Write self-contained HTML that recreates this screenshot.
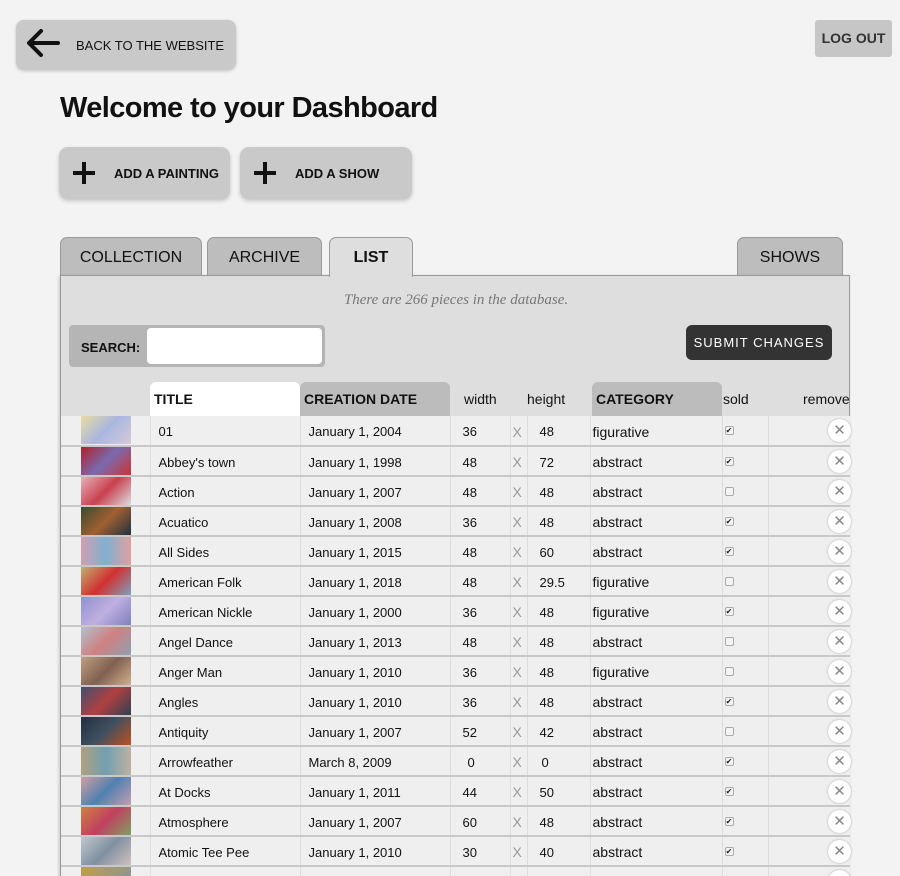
<!DOCTYPE html>
<html><head><meta charset="utf-8"><style>
*{box-sizing:border-box;margin:0;padding:0}
html,body{width:900px;height:876px;overflow:hidden}
body{background:#f3f3f3;font-family:"Liberation Sans",Arial,sans-serif;color:#111;position:relative}
.abs{position:absolute}
.back{left:16px;top:20px;width:220px;height:50px;background:#c9c9c9;border-radius:8px;box-shadow:0 1px 3px rgba(0,0,0,.2)}
.back span{position:absolute;left:60px;top:18px;font-size:13px}
.logout{left:815px;top:20px;width:77px;height:37px;background:#c6c6c6;border-radius:3px;font-weight:bold;font-size:14px;color:#333;text-align:center;line-height:37px}
h1{position:absolute;left:60px;top:92px;font-size:29px;font-weight:bold;letter-spacing:-0.6px}
.add{top:147px;height:52px;background:#c9c9c9;border-radius:9px;box-shadow:0 2px 4px rgba(0,0,0,.2);font-weight:bold;font-size:13px}
.add span{position:absolute;left:55px;top:19px}
.tab{top:237px;height:39px;background:#bdbdbd;border:1px solid #999;border-bottom:none;border-radius:7px 7px 0 0;text-align:center;line-height:40px;font-size:16px}
.panel{left:60px;top:275px;width:790px;height:610px;background:#dedede;border:1px solid #999;box-shadow:-1px 1px 3px rgba(0,0,0,.2)}
.note{left:0;width:790px;top:16px;text-align:center;font-family:"Liberation Serif",serif;font-style:italic;color:#777;font-size:15px}
.search{left:8px;top:49px;width:256px;height:42px;background:#b5b5b5;border-radius:4px}
.search b{position:absolute;left:12px;top:15px;font-size:13px}
.search i{position:absolute;left:78px;top:3px;width:175px;height:36px;background:#fff;border-radius:4px}
.submit{left:625px;top:49px;width:146px;height:35px;background:#333;color:#fff;border-radius:6px;font-size:13px;letter-spacing:1px;text-align:center;line-height:35px}
.hd{top:106px;height:34px;font-size:14px;line-height:34px}
table{position:absolute;left:0;top:140px;border-collapse:collapse;table-layout:fixed;width:789px;font-size:13px}
td{height:30px;background:#efefef;border-bottom:2px solid #c8c8c8;padding:2px 0 0 0;vertical-align:middle;position:relative}
td.t{padding-left:8px;border-left:1px solid #ddd}
td.d{padding-left:8px;border-left:1px solid #ddd}
td.w{padding-left:12px;border-left:1px solid #ddd}
td.x{color:#999;font-size:14px;border-left:1px solid #ddd;border-right:1px solid #ddd;padding-left:2px}
td.h{padding-left:12px}
td.c{font-size:14px;padding-left:2px;border-left:1px solid #ddd}
td.s{border-left:1px solid #ddd;border-right:1px solid #ddd}
.th{position:absolute;left:20px;top:0;width:50px;height:28px}
.cb{position:absolute;left:2px;top:10px;width:9px;height:9px;border:1px solid #aaa;border-radius:2px;background:#f4f4f4;font-size:8px;line-height:7px;text-align:center;color:#222}
.rm{position:absolute;right:-1px;top:3px;width:23px;height:23px;border-radius:50%;background:#fff;box-shadow:0 0 2px rgba(0,0,0,.3);color:#888;text-align:center;line-height:23px;font-size:15px}
</style></head><body>
<div class="abs back"><svg class="abs" style="left:10px;top:8px" width="34" height="30" viewBox="0 0 34 30"><path d="M32 15H4M15 3L3 15l12 12" stroke="#111" stroke-width="4" fill="none" stroke-linecap="round" stroke-linejoin="round"/></svg><span>BACK TO THE WEBSITE</span></div>
<div class="abs logout">LOG OUT</div>
<h1>Welcome to your Dashboard</h1>
<div class="abs add" style="left:59px;width:171px"><svg class="abs" style="left:13px;top:14px" width="24" height="24"><path d="M12 1v22M1 12h22" stroke="#111" stroke-width="4"/></svg><span>ADD A PAINTING</span></div>
<div class="abs add" style="left:240px;width:172px"><svg class="abs" style="left:13px;top:14px" width="24" height="24"><path d="M12 1v22M1 12h22" stroke="#111" stroke-width="4"/></svg><span>ADD A SHOW</span></div>
<div class="abs tab" style="left:60px;width:142px">COLLECTION</div>
<div class="abs tab" style="left:207px;width:115px">ARCHIVE</div>
<div class="abs tab" style="left:737px;width:106px">SHOWS</div>
<div class="abs panel">
<div class="abs note">There are 266 pieces in the database.</div>
<div class="abs search"><b>SEARCH:</b><i></i></div>
<div class="abs submit">SUBMIT CHANGES</div>
<div class="abs hd" style="left:89px;width:150px;background:#fff;border-radius:6px 6px 0 0;font-weight:bold;padding-left:4px">TITLE</div>
<div class="abs hd" style="left:239px;width:150px;background:#bcbcbc;border-radius:6px 6px 0 0;font-weight:bold;padding-left:4px">CREATION DATE</div>
<div class="abs hd" style="left:403px">width</div>
<div class="abs hd" style="left:466px">height</div>
<div class="abs hd" style="left:531px;width:130px;background:#bcbcbc;border-radius:6px 6px 0 0;font-weight:bold;padding-left:4px">CATEGORY</div>
<div class="abs hd" style="left:662px">sold</div>
<div class="abs hd" style="left:742px">remove</div>
<table>
<colgroup><col style="width:89px"><col style="width:150px"><col style="width:150px"><col style="width:60px"><col style="width:17px"><col style="width:63px"><col style="width:132px"><col style="width:46px"><col style="width:82px"></colgroup>
<tr><td><div class="th" style="background:linear-gradient(135deg,#e8dca0,#a9b7e0,#d6c9d9)"></div></td><td class="t">01</td><td class="d">January 1, 2004</td><td class="w">36</td><td class="x">X</td><td class="h">48</td><td class="c">figurative</td><td class="s"><div class="cb">✔</div></td><td><div class="rm">✕</div></td></tr>
<tr><td><div class="th" style="background:linear-gradient(135deg,#b0202a,#7a6ab0,#c33)"></div></td><td class="t">Abbey's town</td><td class="d">January 1, 1998</td><td class="w">48</td><td class="x">X</td><td class="h">72</td><td class="c">abstract</td><td class="s"><div class="cb">✔</div></td><td><div class="rm">✕</div></td></tr>
<tr><td><div class="th" style="background:linear-gradient(135deg,#e8b0b8,#c84050,#ddd)"></div></td><td class="t">Action</td><td class="d">January 1, 2007</td><td class="w">48</td><td class="x">X</td><td class="h">48</td><td class="c">abstract</td><td class="s"><div class="cb"></div></td><td><div class="rm">✕</div></td></tr>
<tr><td><div class="th" style="background:linear-gradient(135deg,#3a4a30,#a06030,#203040)"></div></td><td class="t">Acuatico</td><td class="d">January 1, 2008</td><td class="w">36</td><td class="x">X</td><td class="h">48</td><td class="c">abstract</td><td class="s"><div class="cb">✔</div></td><td><div class="rm">✕</div></td></tr>
<tr><td><div class="th" style="background:linear-gradient(90deg,#d0a0b0,#80b0d0,#e0a0a0)"></div></td><td class="t">All Sides</td><td class="d">January 1, 2015</td><td class="w">48</td><td class="x">X</td><td class="h">60</td><td class="c">abstract</td><td class="s"><div class="cb">✔</div></td><td><div class="rm">✕</div></td></tr>
<tr><td><div class="th" style="background:linear-gradient(135deg,#c0b070,#d03030,#80a0c0)"></div></td><td class="t">American Folk</td><td class="d">January 1, 2018</td><td class="w">48</td><td class="x">X</td><td class="h">29.5</td><td class="c">figurative</td><td class="s"><div class="cb"></div></td><td><div class="rm">✕</div></td></tr>
<tr><td><div class="th" style="background:linear-gradient(135deg,#9090d0,#c0b0e0,#8080c0)"></div></td><td class="t">American Nickle</td><td class="d">January 1, 2000</td><td class="w">36</td><td class="x">X</td><td class="h">48</td><td class="c">figurative</td><td class="s"><div class="cb">✔</div></td><td><div class="rm">✕</div></td></tr>
<tr><td><div class="th" style="background:linear-gradient(135deg,#b0c0d0,#d08080,#90a0b0)"></div></td><td class="t">Angel Dance</td><td class="d">January 1, 2013</td><td class="w">48</td><td class="x">X</td><td class="h">48</td><td class="c">abstract</td><td class="s"><div class="cb"></div></td><td><div class="rm">✕</div></td></tr>
<tr><td><div class="th" style="background:linear-gradient(135deg,#c0a080,#806050,#d0b090)"></div></td><td class="t">Anger Man</td><td class="d">January 1, 2010</td><td class="w">36</td><td class="x">X</td><td class="h">48</td><td class="c">figurative</td><td class="s"><div class="cb"></div></td><td><div class="rm">✕</div></td></tr>
<tr><td><div class="th" style="background:linear-gradient(135deg,#405070,#b04040,#304050)"></div></td><td class="t">Angles</td><td class="d">January 1, 2010</td><td class="w">36</td><td class="x">X</td><td class="h">48</td><td class="c">abstract</td><td class="s"><div class="cb">✔</div></td><td><div class="rm">✕</div></td></tr>
<tr><td><div class="th" style="background:linear-gradient(135deg,#203040,#405060,#c05020)"></div></td><td class="t">Antiquity</td><td class="d">January 1, 2007</td><td class="w">52</td><td class="x">X</td><td class="h">42</td><td class="c">abstract</td><td class="s"><div class="cb"></div></td><td><div class="rm">✕</div></td></tr>
<tr><td><div class="th" style="background:linear-gradient(90deg,#b0a080,#70a0b0,#c0b0a0)"></div></td><td class="t">Arrowfeather</td><td class="d">March 8, 2009</td><td class="w" style="padding-left:17px">0</td><td class="x">X</td><td class="h" style="padding-left:14px">0</td><td class="c">abstract</td><td class="s"><div class="cb">✔</div></td><td><div class="rm">✕</div></td></tr>
<tr><td><div class="th" style="background:linear-gradient(135deg,#d0a0a0,#5080b0,#c0a0b0)"></div></td><td class="t">At Docks</td><td class="d">January 1, 2011</td><td class="w">44</td><td class="x">X</td><td class="h">50</td><td class="c">abstract</td><td class="s"><div class="cb">✔</div></td><td><div class="rm">✕</div></td></tr>
<tr><td><div class="th" style="background:linear-gradient(135deg,#d08040,#c04060,#80a060)"></div></td><td class="t">Atmosphere</td><td class="d">January 1, 2007</td><td class="w">60</td><td class="x">X</td><td class="h">48</td><td class="c">abstract</td><td class="s"><div class="cb">✔</div></td><td><div class="rm">✕</div></td></tr>
<tr><td><div class="th" style="background:linear-gradient(135deg,#c0c8d0,#8090a0,#d0c0c0)"></div></td><td class="t">Atomic Tee Pee</td><td class="d">January 1, 2010</td><td class="w">30</td><td class="x">X</td><td class="h">40</td><td class="c">abstract</td><td class="s"><div class="cb">✔</div></td><td><div class="rm">✕</div></td></tr>
<tr><td><div class="th" style="background:linear-gradient(135deg,#c0a040,#8090b0)"></div></td><td class="t"></td><td class="d"></td><td class="w"></td><td class="x"></td><td class="h"></td><td class="c"></td><td class="s"></td><td><div class="rm">✕</div></td></tr>
</table>
</div>
<div class="abs tab" style="left:329px;top:237px;width:84px;height:40px;background:#dedede;font-weight:bold">LIST</div>
</body></html>
